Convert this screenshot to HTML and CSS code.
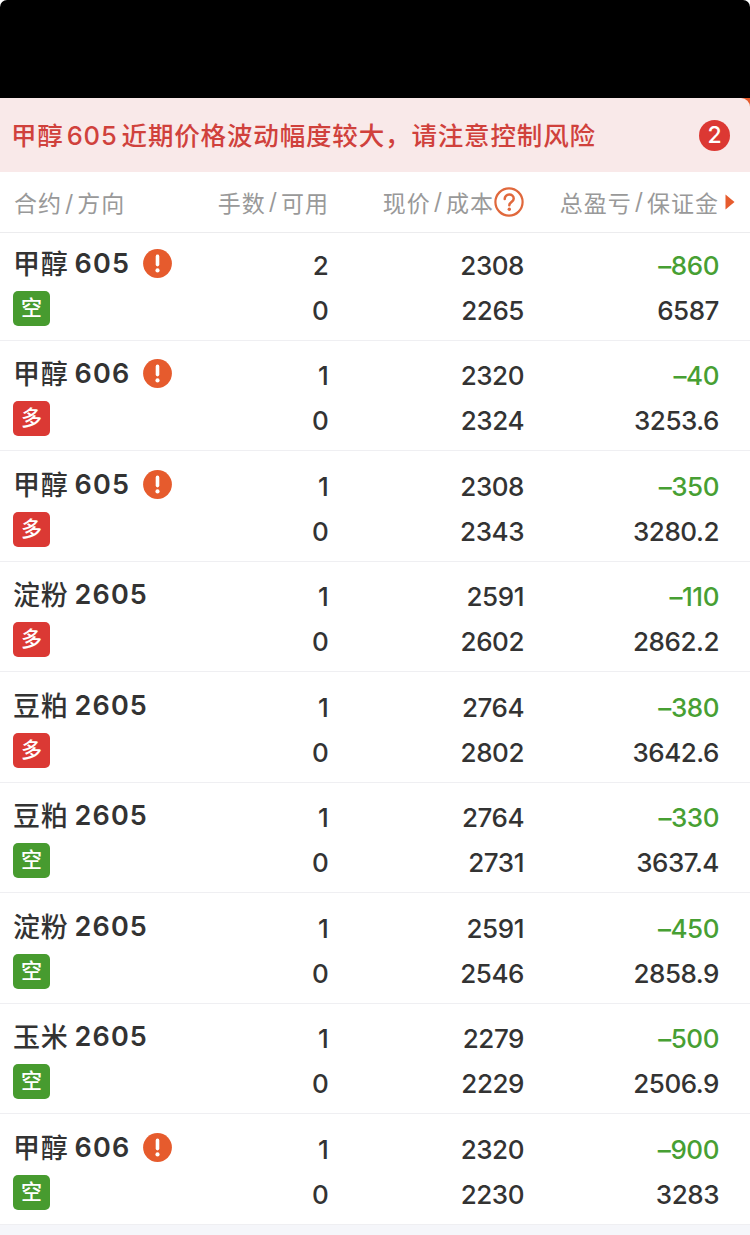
FILE: index.html
```html
<!DOCTYPE html>
<html lang="zh-CN">
<head>
<meta charset="utf-8">
<title>持仓</title>
<link rel="stylesheet" href="styles.css">
</head>
<body>
<svg class="defs" width="0" height="0">
  <symbol id="alert" viewBox="0 0 29 29"><circle cx="14.5" cy="14.5" r="14.4" fill="#e65b2d"/><path d="M14.5 7.4V15.6" stroke="#fff" stroke-width="3.6" stroke-linecap="round"/><circle cx="14.5" cy="21.4" r="2.1" fill="#fff"/></symbol>
</svg>
<div class="statusbar-wrap"><div class="statusbar"></div></div>
<div class="notice-wrap"><div class="notice"><span class="notice-text">甲醇<span class="num">605</span>近期价格波动幅度较大，请注意控制风险</span><span class="count">2</span></div></div>
<div class="head">
  <div class="c1">合约<i>/</i>方向</div>
  <div class="c2">手数<i>/</i>可用</div>
  <div class="c3">现价<i>/</i>成本<svg class="help" viewBox="0 0 30 30"><circle cx="15" cy="15" r="13.6" fill="none" stroke="#e0683c" stroke-width="2.2"/><path d="M10.7 12.1C10.7 9.3 12.6 7.6 15.2 7.6S19.7 9.3 19.7 11.7C19.7 14.9 15.3 15.1 15.3 18.2" fill="none" stroke="#e0683c" stroke-width="2.5" stroke-linecap="round"/><circle cx="15.3" cy="22.3" r="1.7" fill="#e0683c"/></svg></div>
  <div class="c4">总盈亏<i>/</i>保证金</div>
  <svg class="more" viewBox="0 0 10 16"><path d="M0.5 0.5L9.5 8L0.5 15.5Z" fill="#e65b2d"/></svg>
</div>
<div class="list">
<div class="row"><div class="c1"><div class="name">甲醇<b>605</b><svg class="alert"><use href="#alert"/></svg></div><span class="tag short">空</span></div><div class="c2"><p>2</p><p>0</p></div><div class="c3"><p>2308</p><p>2265</p></div><div class="c4"><p class="loss">–860</p><p>6587</p></div></div>
<div class="row"><div class="c1"><div class="name">甲醇<b>606</b><svg class="alert"><use href="#alert"/></svg></div><span class="tag long">多</span></div><div class="c2"><p>1</p><p>0</p></div><div class="c3"><p>2320</p><p>2324</p></div><div class="c4"><p class="loss">–40</p><p>3253.6</p></div></div>
<div class="row"><div class="c1"><div class="name">甲醇<b>605</b><svg class="alert"><use href="#alert"/></svg></div><span class="tag long">多</span></div><div class="c2"><p>1</p><p>0</p></div><div class="c3"><p>2308</p><p>2343</p></div><div class="c4"><p class="loss">–350</p><p>3280.2</p></div></div>
<div class="row"><div class="c1"><div class="name">淀粉<b>2605</b></div><span class="tag long">多</span></div><div class="c2"><p>1</p><p>0</p></div><div class="c3"><p>2591</p><p>2602</p></div><div class="c4"><p class="loss">–110</p><p>2862.2</p></div></div>
<div class="row"><div class="c1"><div class="name">豆粕<b>2605</b></div><span class="tag long">多</span></div><div class="c2"><p>1</p><p>0</p></div><div class="c3"><p>2764</p><p>2802</p></div><div class="c4"><p class="loss">–380</p><p>3642.6</p></div></div>
<div class="row"><div class="c1"><div class="name">豆粕<b>2605</b></div><span class="tag short">空</span></div><div class="c2"><p>1</p><p>0</p></div><div class="c3"><p>2764</p><p>2731</p></div><div class="c4"><p class="loss">–330</p><p>3637.4</p></div></div>
<div class="row"><div class="c1"><div class="name">淀粉<b>2605</b></div><span class="tag short">空</span></div><div class="c2"><p>1</p><p>0</p></div><div class="c3"><p>2591</p><p>2546</p></div><div class="c4"><p class="loss">–450</p><p>2858.9</p></div></div>
<div class="row"><div class="c1"><div class="name">玉米<b>2605</b></div><span class="tag short">空</span></div><div class="c2"><p>1</p><p>0</p></div><div class="c3"><p>2279</p><p>2229</p></div><div class="c4"><p class="loss">–500</p><p>2506.9</p></div></div>
<div class="row"><div class="c1"><div class="name">甲醇<b>606</b><svg class="alert"><use href="#alert"/></svg></div><span class="tag short">空</span></div><div class="c2"><p>1</p><p>0</p></div><div class="c3"><p>2320</p><p>2230</p></div><div class="c4"><p class="loss">–900</p><p>3283</p></div></div>
</div>
</body>
</html>
```
FILE: styles.css
```css
* { box-sizing: border-box; }
body { margin: 0; width: 750px; height: 1235px; overflow: hidden; background: #f5f6fa; color: #333; font-family: Inter, "Noto Sans CJK SC", sans-serif; }
p { margin: 0; }
.defs { display: block; }
.statusbar-wrap { background: #fff; }
.statusbar { height: 98px; background: #000; border-radius: 7px 7px 0 0; }
.notice-wrap { height: 74px; background: #e65b2d; }
.notice { height: 74px; padding: 0 20px 0 11px; display: flex; align-items: center; justify-content: space-between; background: #f9e9e9; border-top-right-radius: 9px; }
.notice-text { padding-bottom: 3px; font-size: 25.5px; font-weight: 500; letter-spacing: 0.85px; color: #d0413c; white-space: nowrap; }
.num { margin: 0 4px 0 3px; }
.count { width: 31px; height: 31px; border-radius: 50%; background: #dc3833; color: #fff; font-size: 23px; font-weight: 500; line-height: 31px; text-align: center; }
.head, .row { display: grid; grid-template-columns: 204px 111px 196px 195px auto; padding-left: 13px; background: #fff; }
.head { height: 61px; border-bottom: 1px solid #ececee; align-items: center; font-size: 23px; letter-spacing: 1px; color: #999; white-space: nowrap; }
.head i { font-style: normal; margin: 0 3px; }
.head .c1, .head .c2 { position: relative; left: 1px; }
.c2, .c3, .c4 { display: flex; justify-content: flex-end; align-items: center; }
.help { width: 30px; height: 30px; }
.more { width: 10px; height: 16px; margin-left: 6px; }
.row { height: 110.5px; padding-top: 12.5px; border-bottom: 1px solid #efeff2; }
.row:first-child { height: 107.5px; padding-top: 9.5px; }
.row .c2, .row .c3, .row .c4 { flex-direction: column; align-items: flex-end; justify-content: flex-start; }
.row p { height: 45px; line-height: 45px; font-size: 26px; font-weight: 450; letter-spacing: -0.45px; }
.row .c2 p { padding-right: 0; letter-spacing: -0.8px; }
.row .loss { color: #479f33; }
.name { height: 39px; display: flex; align-items: center; font-size: 27px; font-weight: 500; letter-spacing: 0.8px; white-space: nowrap; }
.name b { font-weight: 600; margin: 2px 0 0 6px; letter-spacing: 1.1px; }
.alert { width: 29px; height: 29px; margin: 2px 0 0 13px; }
.tag { display: block; width: 37px; height: 35px; margin-top: 9px; border-radius: 5px; color: #fff; font-size: 21px; font-weight: 500; line-height: 34px; text-align: center; }
.short { background: #479b2f; }
.long { background: #db3934; }
```
